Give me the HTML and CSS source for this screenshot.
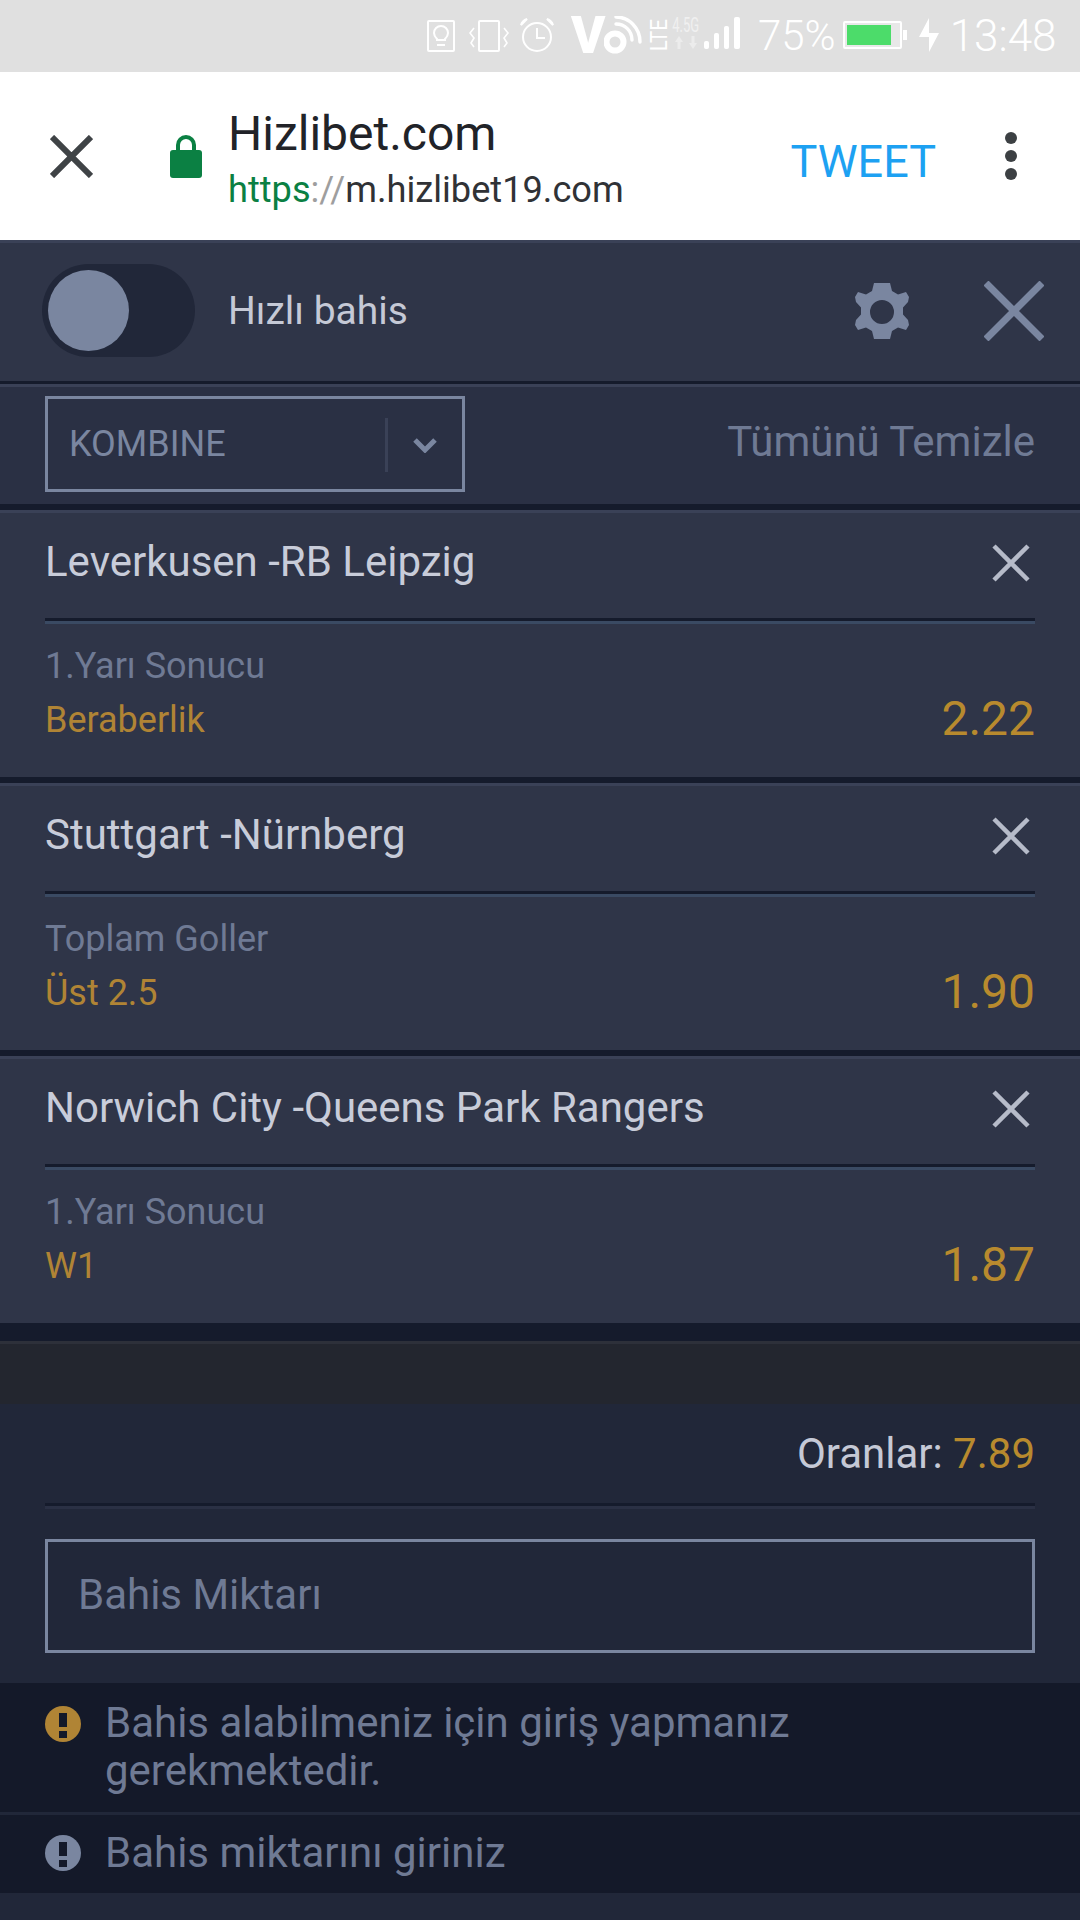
FILE: index.html
```html
<!DOCTYPE html>
<html lang="tr">
<head>
  <meta charset="UTF-8" />
  <meta name="viewport" content="width=device-width, initial-scale=1.0" />
  <title>Hizlibet - Kupon</title>
  <link rel="stylesheet" href="styles.css">
</head>
<body>

  <!-- status bar -->
  <div class="statusbar">
    <svg class="st-bulb" width="28" height="32" viewBox="0 0 28 32">
      <rect x="1" y="1" width="26" height="30" rx="1" fill="none" stroke="#fff" stroke-width="2"/>
      <path d="M10 19c-2-2-3-3-3-6a7 7 0 0 1 14 0c0 3-1 4-3 6v1h-8z" fill="none" stroke="#fff" stroke-width="2"/>
      <rect x="10" y="24" width="8" height="2" fill="#fff"/>
    </svg>
    <svg class="st-vibrate" width="40" height="32" viewBox="0 0 40 32">
      <rect x="10" y="1" width="20" height="30" rx="1" fill="none" stroke="#fff" stroke-width="2"/>
      <path d="M5 8 1 13l4 5-3 5 3 4M35 8l4 5-4 5 3 5-3 4" fill="none" stroke="#fff" stroke-width="1.600"/>
    </svg>
    <svg class="st-alarm" width="34" height="34" viewBox="0 0 34 34">
      <circle cx="17" cy="19" r="14" fill="none" stroke="#fff" stroke-width="2"/>
      <path d="M17 10v10h8" fill="none" stroke="#fff" stroke-width="2"/>
      <path d="M1 7c1-3 3-5 6-6l-6 6zM33 7c-1-3-3-5-6-6l6 6z" fill="none" stroke="#fff" stroke-width="2"/>
    </svg>
    <span class="st-v">V</span>
    <svg class="st-wifi" width="40" height="38" viewBox="0 0 40 38">
      <circle cx="11" cy="26" r="8.500" fill="none" stroke="#fff" stroke-width="6"/>
      <path d="M12 8c9 0 16 7 16 16" fill="none" stroke="#fff" stroke-width="3.400" stroke-linecap="round"/>
      <path d="M12 1c13 0 24 11 24 25" fill="none" stroke="#fff" stroke-width="3.400" stroke-linecap="round"/>
    </svg>
    <span class="st-lte">LTE</span>
    <div class="st-net">
      <span class="st-g">4.5G</span>
      <svg width="24" height="13" viewBox="0 0 24 13">
        <path d="M5 0 9 6H6.500v7h-3V6H1zM19 13l-4-6h2.500V0h3v7H23z" fill="#ececec"/>
      </svg>
    </div>
    <svg class="st-signal" width="36" height="32" viewBox="0 0 36 32">
      <rect x="0" y="24" width="5" height="8" rx="2" fill="#fff"/>
      <rect x="10" y="16" width="5" height="16" rx="2" fill="#fff"/>
      <rect x="20" y="9" width="5" height="23" rx="2" fill="#fff"/>
      <rect x="30" y="0" width="6" height="32" rx="2" fill="#fff"/>
    </svg>
    <span class="st-text st-pct">75%</span>
    <svg class="st-battery" width="64" height="28" viewBox="0 0 64 28">
      <rect x="1" y="1" width="57" height="26" rx="1" fill="#e8e8e8" stroke="#fff" stroke-width="2"/>
      <rect x="4" y="4" width="44" height="20" fill="#4cdc6a"/>
      <rect x="60" y="9" width="4" height="10" fill="#fff"/>
    </svg>
    <svg class="st-bolt" width="20" height="34" viewBox="0 0 20 34">
      <path d="M10 0v15h10L10 34V19H0z" fill="#fff"/>
    </svg>
    <span class="st-text st-time">13:48</span>
  </div>

  <!-- custom tab bar -->
  <div class="tabbar">
    <svg class="tab-close" width="43" height="43" viewBox="0 0 43 43">
      <path d="M2 2l39 39M41 2 2 41" fill="none" stroke="#3f4346" stroke-width="6"/>
    </svg>
    <svg class="tab-lock" width="32" height="43" viewBox="0 0 32 43">
      <path d="M8 17V10a8 8 0 0 1 16 0v7" fill="none" stroke="#0b8043" stroke-width="4"/>
      <rect x="0" y="15" width="32" height="28" rx="3" fill="#0b8043"/>
    </svg>
    <div class="tab-info">
      <div class="tab-title">Hizlibet.com</div>
      <div class="tab-url"><span class="url-https">https</span><span class="url-sep">://</span>m.hizlibet19.com</div>
    </div>
    <span class="tab-tweet">TWEET</span>
    <div class="tab-dots"><i></i><i></i><i></i></div>
  </div>

  <!-- kupon -->
  <div class="slip">
    <div class="slip-head">
      <div class="toggle"><div class="toggle-knob"></div></div>
      <span class="toggle-label">Hızlı bahis</span>
      <svg class="gear" width="54" height="58" viewBox="0 0 54 58">
        <path fill-rule="evenodd" fill="#7a86a0" d="M19 0h16l2 8 6 3.500 8-2.500 3 5-1 5-5 5.500v7l5 5.500 1 5-3 5-8-2.500-6 3.500-2 8H19l-2-8-6-3.500-8 2.500-3-5 1-5 5-5.500v-7L1 19l-1-5 3-5 8 2.500L17 8zM27 17a12 12 0 1 0 0 24 12 12 0 0 0 0-24z"/>
      </svg>
      <svg class="head-close" width="60" height="60" viewBox="0 0 60 60">
        <path d="M2 2l56 56M58 2 2 58" fill="none" stroke="#7a86a0" stroke-width="7"/>
      </svg>
    </div>
    <div class="sep-thin"></div>

    <div class="slip-type">
      <div class="select">
        <span class="select-text">KOMBINE</span>
        <div class="select-arrow">
          <svg width="24" height="16" viewBox="0 0 24 16">
            <path d="M2 3l10 10L22 3" fill="none" stroke="#7a86a0" stroke-width="5"/>
          </svg>
        </div>
      </div>
      <span class="clear-all">Tümünü Temizle</span>
    </div>
    <div class="sep"></div>

    <div class="card">
      <div class="card-top">
        <span class="match">Leverkusen -RB Leipzig</span>
        <svg class="x" width="38" height="38" viewBox="0 0 38 38"><path d="M2 2l34 34M36 2 2 36" fill="none" stroke="#b6bbc9" stroke-width="4.500"/></svg>
      </div>
      <div class="rule"></div>
      <div class="card-body">
        <div>
          <div class="market">1.Yarı Sonucu</div>
          <div class="pick">Beraberlik</div>
        </div>
        <span class="odd">2.22</span>
      </div>
    </div>
    <div class="sep"></div>

    <div class="card">
      <div class="card-top">
        <span class="match">Stuttgart -Nürnberg</span>
        <svg class="x" width="38" height="38" viewBox="0 0 38 38"><path d="M2 2l34 34M36 2 2 36" fill="none" stroke="#b6bbc9" stroke-width="4.500"/></svg>
      </div>
      <div class="rule"></div>
      <div class="card-body">
        <div>
          <div class="market">Toplam Goller</div>
          <div class="pick">Üst 2.5</div>
        </div>
        <span class="odd">1.90</span>
      </div>
    </div>
    <div class="sep"></div>

    <div class="card">
      <div class="card-top">
        <span class="match">Norwich City -Queens Park Rangers</span>
        <svg class="x" width="38" height="38" viewBox="0 0 38 38"><path d="M2 2l34 34M36 2 2 36" fill="none" stroke="#b6bbc9" stroke-width="4.500"/></svg>
      </div>
      <div class="rule"></div>
      <div class="card-body">
        <div>
          <div class="market">1.Yarı Sonucu</div>
          <div class="pick">W1</div>
        </div>
        <span class="odd">1.87</span>
      </div>
    </div>
    <div class="sep-end"></div>
    <div class="band"></div>

    <div class="summary">
      <div class="total">Oranlar: <span class="total-odd">7.89</span></div>
      <div class="rule rule-dark"></div>
      <div class="stake">Bahis Miktarı</div>
    </div>

    <div class="alert alert-first">
      <svg class="alert-icon" width="36" height="36" viewBox="0 0 36 36">
        <circle cx="18" cy="18" r="18" fill="#b08435"/>
        <rect x="14" y="7" width="8" height="14" fill="#141929"/>
        <rect x="14" y="25" width="8" height="7" fill="#141929"/>
      </svg>
      <span class="alert-text">Bahis alabilmeniz için giriş yapmanız gerekmektedir.</span>
    </div>
    <div class="alert alert-last">
      <svg class="alert-icon" width="36" height="36" viewBox="0 0 36 36">
        <circle cx="18" cy="18" r="18" fill="#7a86a0"/>
        <rect x="14" y="7" width="8" height="14" fill="#141929"/>
        <rect x="14" y="25" width="8" height="7" fill="#141929"/>
      </svg>
      <span class="alert-text">Bahis miktarını giriniz</span>
    </div>
  </div>

</body>
</html>
```

FILE: styles.css
```css
body {
  font-family: Roboto, "Noto Sans", sans-serif;
  margin: 0;
  padding: 0;
  width: 1080px;
  height: 1920px;
  overflow: hidden;
  background: #212739;
}

/* status bar */
.statusbar {
  height: 72px;
  background: #e0e0e0;
  display: flex;
  align-items: flex-start;
  padding-left: 427px;
  box-sizing: border-box;
  color: #fff;
}

.st-bulb { margin-top: 20px; }
.st-vibrate { margin: 20px 0 0 14px; }
.st-alarm { margin: 18px 0 0 11px; }

.st-v {
  font-size: 52px;
  line-height: 38px;
  font-weight: 900;
  margin: 17px 0 0 17px;
  width: 33px;
}

.st-wifi { margin-top: 16px; }

.st-lte {
  writing-mode: vertical-rl;
  transform: rotate(180deg) scaleY(0.86);
  font-size: 24px;
  line-height: 17px;
  height: 42px;
  margin: 14px 0 0 7px;
  text-align: center;
}

.st-net {
  display: flex;
  flex-direction: column;
  align-items: center;
  margin: 14px 0 0 4px;
  width: 27px;
}

.st-g {
  font-size: 21px;
  line-height: 22px;
  transform: scaleX(0.62);
  white-space: nowrap;
  color: #f0f0f0;
}

.st-signal { margin: 17px 0 0 5px; }

.st-text {
  font-size: 42px;
  font-weight: 300;
  line-height: 72px;
}

.st-pct { margin-left: 18px; }
.st-battery { margin: 21px 0 0 7px; }
.st-bolt { margin: 18px 0 0 12px; }

.st-time {
  font-size: 44px;
  margin-left: 11px;
}

/* custom tab bar */
.tabbar {
  height: 168px;
  background: #fff;
  display: flex;
  align-items: center;
  padding-right: 63px;
}

.tab-close { margin-left: 50px; }
.tab-lock { margin-left: 77px; }

.tab-info {
  margin-left: 26px;
  flex: 1;
  padding-top: 7px;
}

.tab-title {
  font-size: 48px;
  line-height: 56px;
  color: #212328;
}

.tab-url {
  font-size: 36.2px;
  line-height: 46px;
  margin-top: 5px;
  color: #303236;
}

.url-https { color: #0b8043; }
.url-sep { color: #9e9e9e; }

.tab-tweet {
  font-size: 45px;
  color: #1da1f2;
  padding-top: 10px;
}

.tab-dots {
  display: flex;
  flex-direction: column;
  gap: 6px;
  margin-left: 69px;
}

.tab-dots i {
  display: block;
  width: 12px;
  height: 12px;
  border-radius: 50%;
  background: #3c4043;
}

/* kupon */
.slip-head {
  height: 135px;
  border-top: 3px solid #3a4157;
  background: #2f3548;
  display: flex;
  align-items: center;
  padding: 0 36px 3px 42px;
}

.toggle {
  width: 153px;
  height: 93px;
  border-radius: 47px;
  background: #212739;
  display: flex;
  align-items: center;
  padding-left: 6px;
  box-sizing: border-box;
}

.toggle-knob {
  width: 81px;
  height: 81px;
  border-radius: 50%;
  background: #7a86a0;
}

.toggle-label {
  font-size: 39px;
  color: #c5c9d6;
  margin-left: 33px;
  flex: 1;
}

.gear { margin-top: 3px; }
.head-close { margin-left: 75px; }

.sep-thin {
  height: 3px;
  background: #151b2c;
  border-bottom: 3px solid #3a4157;
}

.sep {
  height: 6px;
  background: #151b2c;
  border-bottom: 3px solid #3a4157;
}

.sep-end {
  height: 18px;
  background: #151b2c;
  border-bottom: 3px solid #2d303a;
}

.slip-type {
  height: 114px;
  background: #2a3044;
  display: flex;
  align-items: center;
  justify-content: space-between;
  padding: 0 45px 3px;
}

.select {
  width: 420px;
  height: 96px;
  border: 3px solid #7a86a0;
  box-sizing: border-box;
  display: flex;
  align-items: center;
  justify-content: space-between;
}

.select-text {
  font-size: 36px;
  color: #7a86a0;
  margin-left: 21px;
}

.select-arrow {
  width: 77px;
  height: 54px;
  border-left: 3px solid #3a4157;
  box-sizing: border-box;
  display: flex;
  align-items: center;
  justify-content: center;
  margin-top: 1px;
}

.clear-all {
  font-size: 42px;
  color: #6f7a94;
  padding-bottom: 5px;
}

.card {
  height: 264px;
  background: #2f3548;
  padding: 0 45px;
}

.card-top {
  height: 97px;
  padding-bottom: 8px;
  display: flex;
  align-items: center;
  justify-content: space-between;
}

.match {
  font-size: 42px;
  color: #c8ccd9;
}

.x {
  margin-right: 5px;
  margin-top: 3px;
}

.rule {
  height: 3px;
  background: #151b2c;
  border-bottom: 3px solid #3a4a63;
}

.card-body {
  height: 153px;
  display: flex;
  justify-content: space-between;
  align-items: flex-end;
}

.card-body > div {
  align-self: flex-start;
  padding-top: 18px;
}

.market {
  font-size: 36px;
  line-height: 48px;
  color: #6f7a94;
}

.pick {
  font-size: 36px;
  line-height: 60px;
  color: #b08435;
}

.odd {
  font-size: 48px;
  color: #b88a2e;
  margin-bottom: 30px;
}

.band {
  height: 60px;
  background: #23262f;
}

.summary {
  height: 279px;
  background: #212739;
  padding: 0 45px;
}

.total {
  height: 99px;
  line-height: 100px;
  text-align: right;
  font-size: 42px;
  color: #c5c9d6;
}

.total-odd { color: #b88a2e; }

.rule-dark {
  background: #151b2c;
  border-bottom-color: #2a3044;
}

.stake {
  margin-top: 30px;
  height: 114px;
  border: 3px solid #7a86a0;
  box-sizing: border-box;
  padding-left: 30px;
  line-height: 106px;
  font-size: 42px;
  color: #6f7a94;
}

.alert {
  height: 78px;
  background: #141929;
  display: flex;
  align-items: center;
  padding: 0 45px;
}

.alert-first {
  height: 132px;
  align-items: flex-start;
  border-bottom: 3px solid #212739;
  padding-top: 16px;
  box-sizing: border-box;
}

.alert-first .alert-icon { margin-top: 7px; }

.alert-last { height: 76px; padding-bottom: 2px; }

.alert-icon { flex: none; }

.alert-text {
  font-size: 42px;
  line-height: 48px;
  color: #6f7a94;
  margin-left: 24px;
  width: 720px;
}
```
